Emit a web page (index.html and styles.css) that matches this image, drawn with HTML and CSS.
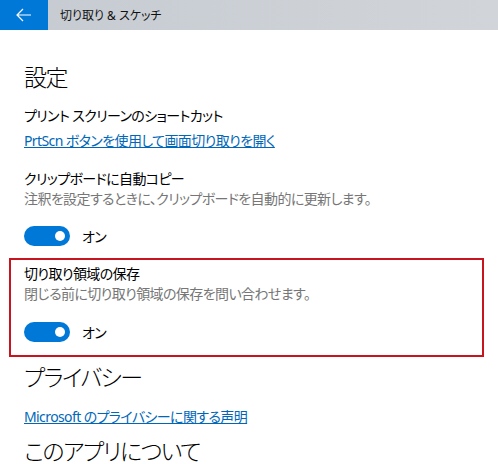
FILE: index.html
```html
<!DOCTYPE html>
<html lang="ja">
<head>
    <meta charset="UTF-8">
    <meta name="viewport" content="width=device-width, initial-scale=1.0">
    <title>切り取り &amp; スケッチ - 設定</title>
    <link rel="stylesheet" href="styles.css">
</head>
<body>
    <div class="titlebar">
        <div class="back-btn">
            <svg width="16" height="14" viewBox="0 0 16 14">
                <path d="M15 7H1.5M7 1L1 7l6 6" fill="none" stroke="#fff" stroke-width="1.2"/>
            </svg>
        </div>
        <div class="app-title">切り取り &amp; スケッチ</div>
    </div>

    <div class="content">
        <h2 class="section-title first">設定</h2>

        <div class="label">プリント スクリーンのショートカット</div>
        <a class="link" href="#">PrtScn ボタンを使用して画面切り取りを開く</a>

        <div class="setting">
            <div class="label">クリップボードに自動コピー</div>
            <div class="desc">注釈を設定するときに、クリップボードを自動的に更新します。</div>
            <div class="toggle-row">
                <span class="toggle"><span class="knob"></span></span>
                <span class="toggle-text">オン</span>
            </div>
        </div>
    </div>

    <div class="setting highlight">
        <div class="label">切り取り領域の保存</div>
        <div class="desc">閉じる前に切り取り領域の保存を問い合わせます。</div>
        <div class="toggle-row">
            <span class="toggle"><span class="knob"></span></span>
            <span class="toggle-text">オン</span>
        </div>
    </div>

    <div class="content">
        <h2 class="section-title privacy">プライバシー</h2>
        <a class="link" href="#">Microsoft のプライバシーに関する声明</a>
        <h2 class="section-title about">このアプリについて</h2>
    </div>
</body>
</html>
```

FILE: styles.css
```css
* {
    margin: 0;
    padding: 0;
    box-sizing: border-box;
}

body {
    font-family: "Noto Sans", "Noto Sans CJK JP", sans-serif;
    font-feature-settings: "palt";
    background: #fff;
    color: #000;
    width: 498px;
    height: 464px;
    overflow: hidden;
}

.titlebar {
    display: flex;
    align-items: center;
    height: 30px;
    background: linear-gradient(to right, #c6cbd1, #d1d5da);
}

.back-btn {
    width: 48px;
    height: 30px;
    background: #0078d7;
    display: flex;
    align-items: center;
    justify-content: center;
}

.app-title {
    font-size: 12px;
    margin-left: 12px;
    color: #111;
}

.content {
    padding-left: 24px;
}

.section-title {
    font-size: 23px;
    font-weight: 300;
    letter-spacing: -1.5px;
    line-height: 32px;
}

.section-title.first {
    margin-top: 31px;
    margin-bottom: 13px;
}

.section-title.privacy {
    margin-top: 4px;
    margin-bottom: 9px;
}

.section-title.about {
    margin-top: 8px;
}

.label,
.desc,
.link,
.toggle-text {
    font-size: 14px;
    letter-spacing: -0.6px;
}

.label {
    line-height: 20px;
}

.desc {
    line-height: 20px;
    color: #767676;
}

.link {
    display: inline-block;
    margin-top: 5px;
    line-height: 20px;
    color: #0067b8;
    text-decoration: underline;
}

.setting {
    margin-top: 18px;
}

.toggle-row {
    display: flex;
    align-items: center;
    margin-top: 17px;
}

.toggle {
    position: relative;
    width: 46px;
    height: 20px;
    border-radius: 10px;
    background: #0078d7;
}

.knob {
    position: absolute;
    right: 5px;
    top: 5px;
    width: 10px;
    height: 10px;
    border-radius: 50%;
    background: #fff;
}

.toggle-text {
    margin-left: 12px;
}

.highlight {
    margin: 12px 0 0 9px;
    width: 475px;
    border: 2px solid #c8141e;
    padding: 4px 13px 13px;
}

.highlight .toggle-row {
    margin-top: 18px;
}
```
